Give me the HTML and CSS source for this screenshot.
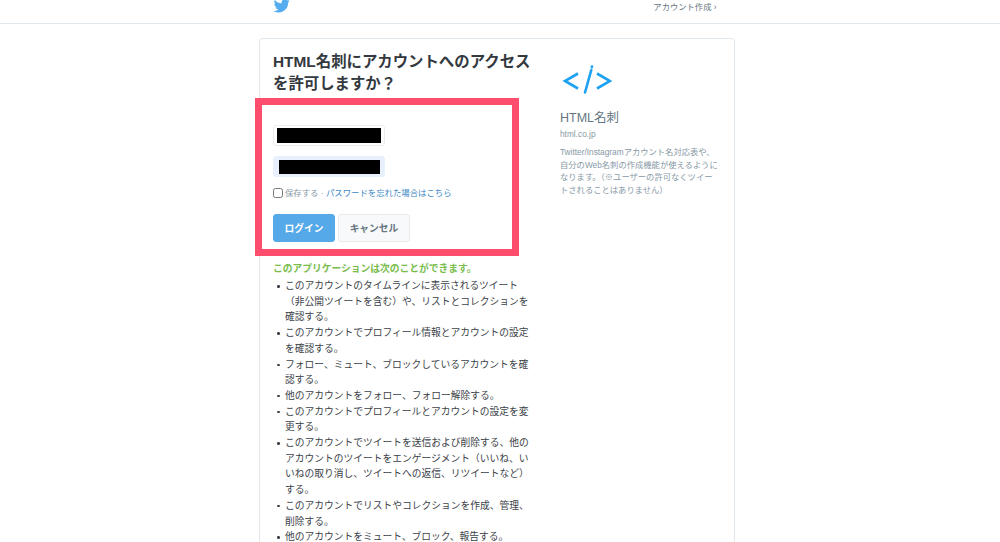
FILE: index.html
```html
<!DOCTYPE html>
<html lang="ja">
<head>
<meta charset="utf-8">
<title>Twitter</title>
<link rel="stylesheet" href="styles.css">
</head>
<body>
<header class="topbar">
  <div class="topbar-inner">
    <svg class="bird" viewBox="0 2.6 24 19" aria-hidden="true"><path fill="#55acee" d="M23.643 4.937c-.835.37-1.732.62-2.675.733.962-.576 1.7-1.49 2.048-2.578-.9.534-1.897.922-2.958 1.13-.85-.904-2.06-1.47-3.4-1.47-2.572 0-4.658 2.086-4.658 4.66 0 .364.042.718.12 1.06-3.873-.195-7.304-2.05-9.602-4.868-.4.69-.63 1.49-.63 2.342 0 1.616.823 3.043 2.072 3.878-.764-.025-1.482-.234-2.11-.583v.06c0 2.257 1.605 4.14 3.737 4.568-.392.106-.803.162-1.227.162-.3 0-.593-.028-.877-.082.593 1.85 2.313 3.198 4.352 3.234-1.595 1.25-3.604 1.995-5.786 1.995-.376 0-.747-.022-1.112-.065 2.062 1.323 4.51 2.093 7.14 2.093 8.57 0 13.255-7.098 13.255-13.254 0-.2-.005-.402-.014-.602.91-.658 1.7-1.477 2.323-2.41z"/></svg>
    <a class="signup" href="#">アカウント作成 ›</a>
  </div>
</header>
<main class="card">
  <section class="left">
    <h1 class="title">HTML名刺にアカウントへのアクセスを許可しますか？</h1>
    <form class="highlight">
      <div class="field"><span class="redact"></span></div>
      <div class="field field-filled"><span class="redact redact-second"></span></div>
      <div class="remember">
        <input class="check" type="checkbox">
        <span>保存する · <a href="#">パスワードを忘れた場合はこちら</a></span>
      </div>
      <div class="buttons">
        <button class="btn btn-primary" type="button">ログイン</button>
        <button class="btn btn-cancel" type="button">キャンセル</button>
      </div>
    </form>
    <h2 class="perm-title">このアプリケーションは次のことができます。</h2>
    <ul class="perms">
      <li>このアカウントのタイムラインに表示されるツイート（非公開ツイートを含む）や、リストとコレクションを確認する。</li>
      <li>このアカウントでプロフィール情報とアカウントの設定を確認する。</li>
      <li>フォロー、ミュート、ブロックしているアカウントを確認する。</li>
      <li>他のアカウントをフォロー、フォロー解除する。</li>
      <li>このアカウントでプロフィールとアカウントの設定を変更する。</li>
      <li>このアカウントでツイートを送信および削除する、他のアカウントのツイートをエンゲージメント（いいね、いいねの取り消し、ツイートへの返信、リツイートなど）する。</li>
      <li>このアカウントでリストやコレクションを作成、管理、削除する。</li>
      <li>他のアカウントをミュート、ブロック、報告する。</li>
    </ul>
  </section>
  <aside class="right">
    <svg class="logo" viewBox="0 0 50 32" aria-hidden="true"><g fill="none" stroke="#1da1f2" stroke-width="2.600"><path d="M16 9.500 3 17l13 7.500"/><path d="M35 9.500 48 17l-13 7.500"/><path d="M29.300 6 23 28.500" stroke-linecap="round"/><path d="M30 2.500l-.2.8" stroke-linecap="round"/></g></svg>
    <h2 class="app-name">HTML名刺</h2>
    <div class="app-url">html.co.jp</div>
    <p class="app-desc">Twitter/Instagramアカウント名対応表や、自分のWeb名刺の作成機能が使えるようになります。（※ユーザーの許可なくツイートされることはありません）</p>
  </aside>
</main>
</body>
</html>
```

FILE: styles.css
```css
* { box-sizing: border-box; }
html, body { height: 542px; overflow: hidden; }
body {
  margin: 0;
  background: #fff;
  color: #292f33;
  font-family: "Liberation Sans", "Noto Sans CJK JP", sans-serif;
}
a { text-decoration: none; }
.topbar { height: 24px; border-bottom: 1px solid #e1e8ed; overflow: hidden; }
.topbar-inner {
  width: 476px;
  margin-left: 258.500px;
  padding: 0 18px 0 14px;
  display: flex;
  justify-content: space-between;
  align-items: flex-start;
}
.bird { width: 17px; height: 14px; display: block; margin-top: -1px; }
.signup { font-size: 8.300px; line-height: 12px; margin-top: 1px; color: #66757f; }
.card {
  width: 476px;
  height: 600px;
  margin: 14px 0 0 258.500px;
  border: 1px solid #e1e8ed;
  border-radius: 4px;
  padding: 12px 14px 0 13.500px;
  display: flex;
}
.left { width: 258px; flex: none; }
.title { margin: 0; font-size: 15.400px; line-height: 22px; font-weight: 700; color: #33393e; }
.highlight {
  width: 264px;
  height: 158px;
  margin: 3px 0 0 -18px;
  border: 7px solid #ff4d6d;
  padding: 20px 0 0 11px;
}
.field {
  width: 112px;
  height: 21px;
  border: 1px solid #e9edf0;
  border-radius: 3px;
  padding: 2px 3px;
  margin-bottom: 10px;
}
.field-filled { background: #e8f0fe; border-color: #e8f0fe; padding: 3px 4px 2px 5px; }
.redact { display: block; height: 15px; background: #000; }
.redact-second { height: 14px; }
.remember { display: flex; align-items: center; gap: 2px; font-size: 8.400px; line-height: 12px; color: #8899a6; height: 12px; }
.remember a { color: #3b88c3; }
.check { width: 10px; height: 10px; margin: 0; flex: none; }
.buttons { display: flex; gap: 3px; margin-top: 15px; }
.btn {
  height: 28px;
  border-radius: 3px;
  font-family: inherit;
  font-size: 9.750px;
  font-weight: 700;
  padding: 0;
}
.btn-primary { width: 62px; background: #55a9e8; border: 1px solid #55a9e8; color: #fff; }
.btn-cancel { width: 72px; background: #f8f9fa; border: 1px solid #e8ebee; color: #66757f; }
.perm-title { margin: 7px 0 0; font-size: 9.750px; line-height: 12px; font-weight: 700; color: #79bd4d; }
.perms { margin: 3px 0 0; padding: 0 0 0 12px; list-style: none; font-size: 9.750px; line-height: 15.700px; color: #3b4248; }
.perms li { position: relative; }
.perms li::before {
  content: "";
  position: absolute;
  left: -8px;
  top: 7px;
  width: 2.500px;
  height: 2.500px;
  border-radius: 50%;
  background: #3b4248;
}
.right { margin-left: 29px; padding-top: 13px; width: 159px; flex: none; }
.logo { width: 50px; height: 32px; display: block; margin-left: 2px; }
.app-name { margin: 13px 0 0; font-size: 12.500px; line-height: 18px; font-weight: 400; color: #66757f; }
.app-url { margin-top: 1px; font-size: 8.300px; line-height: 12px; color: #8899a6; }
.app-desc { margin: 6px 0 0; font-size: 8.300px; line-height: 12.500px; color: #8899a6; }
```
